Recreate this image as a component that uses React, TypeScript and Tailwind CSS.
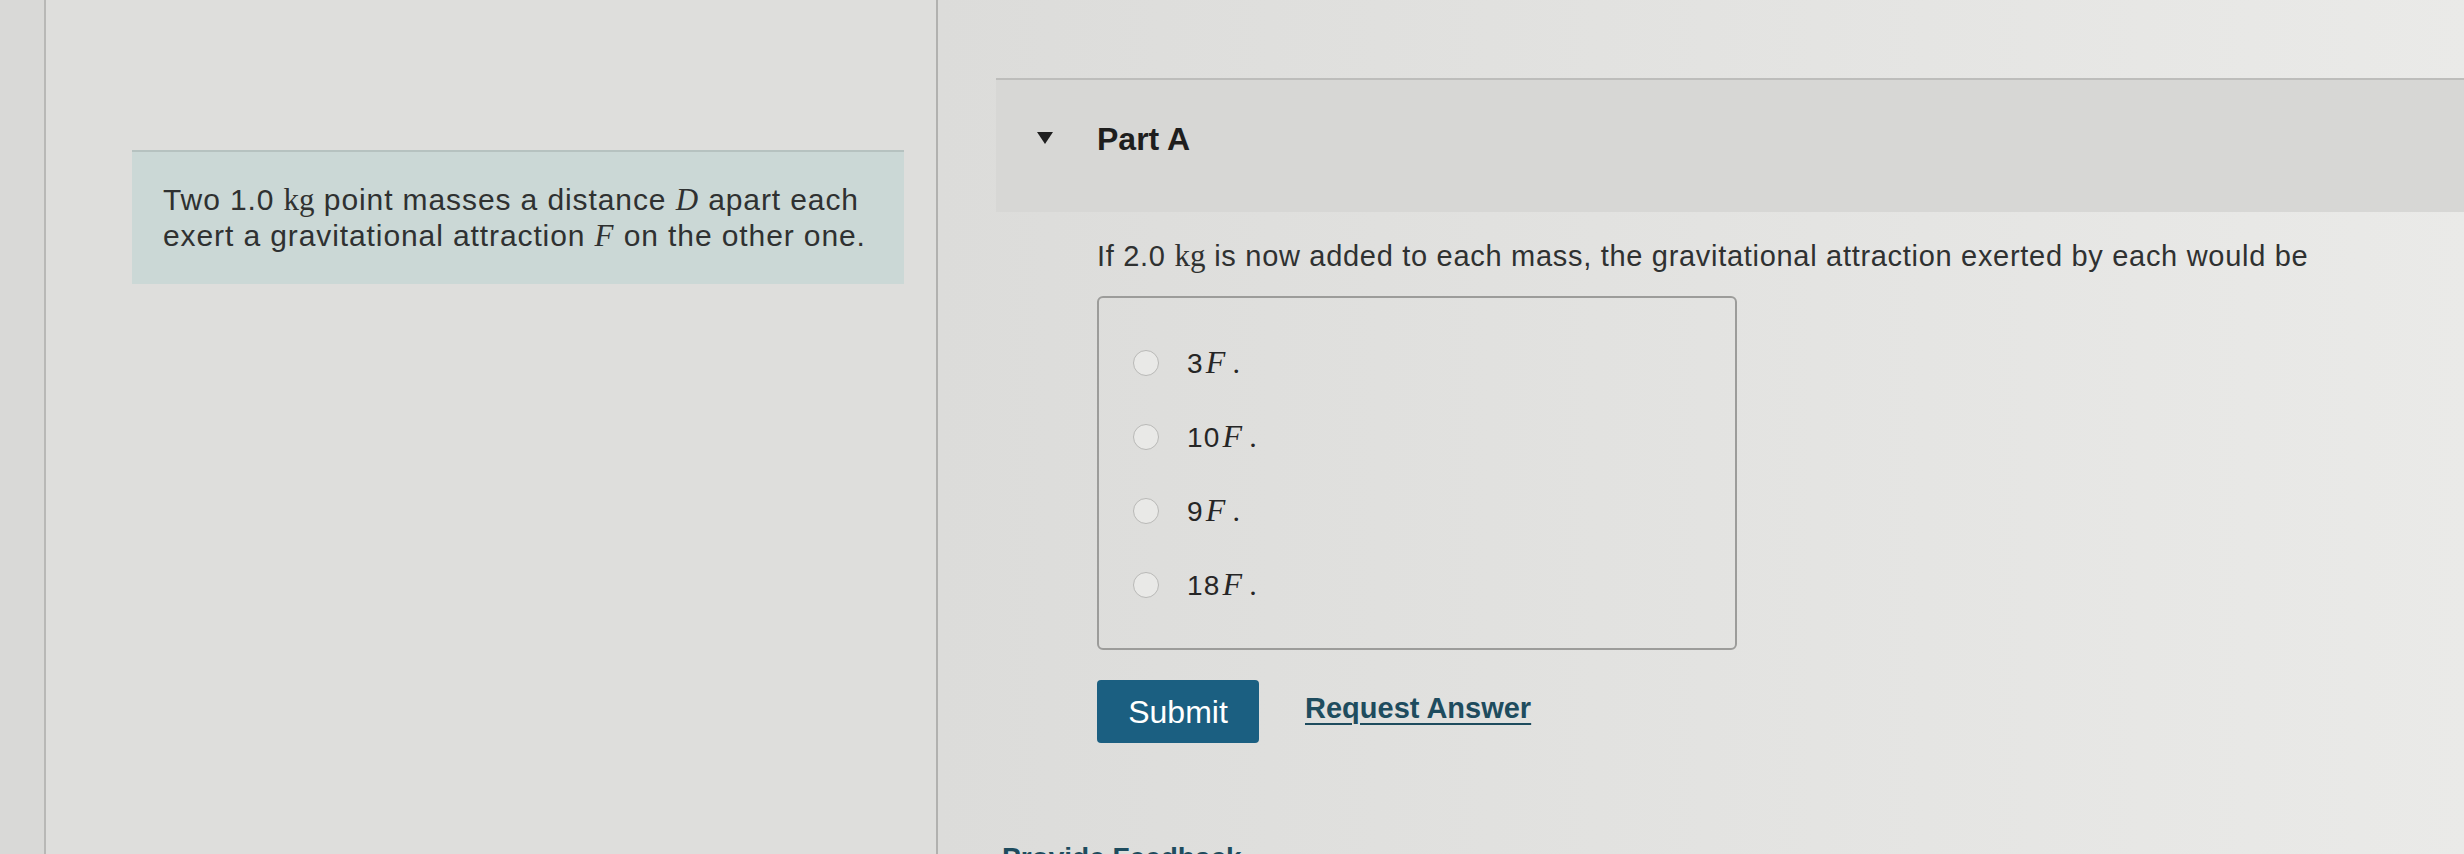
import React from 'react';

const sans = "font-['Liberation_Sans',Arial,sans-serif]";
const serif = "font-['Liberation_Serif','Times_New_Roman',serif]";

const OPTIONS = ['3', '10', '9', '18'];

function Radio() {
  return <span className="w-[26px] h-[26px] rounded-full border-[1.5px] border-[#b9b9b7] bg-[#e9e9e7] shrink-0" />;
}

export default function App() {
  return (
    <div className={`flex w-[2464px] h-[854px] overflow-hidden ${sans}`}>
      {/* left gutter */}
      <div className="w-[46px] bg-[#d9d9d7] border-r-2 border-[#b8b8b6]" />

      {/* intro column */}
      <div className="w-[892px] bg-[#dededc] border-r-2 border-[#b1b1af] pt-[150px] pl-[86px]">
        <div className="w-[772px] bg-[#cbd8d6] border-t-2 border-[#b6c2c0] px-[31px] pt-[30px] pb-[30px] text-[30px] leading-[36px] tracking-[0.9px] text-[#2f3131]">
          Two 1.0 <span className={`${serif} text-[31px] tracking-normal`}>kg</span> point masses a distance{' '}
          <span className={`${serif} italic text-[31px]`}>D</span> apart each exert a gravitational attraction{' '}
          <span className={`${serif} italic text-[31px]`}>F</span> on the other one.
        </div>
      </div>

      {/* part column */}
      <div className="flex-1 bg-linear-to-r from-[#dcdcda] to-[#eaeae8] pt-[78px] pl-[58px]">
        <div className="h-[134px] bg-[#d7d7d5] border-t-2 border-[#bdbdbb] flex items-start pt-[42px] pl-[41px]">
          <svg width="16" height="12" viewBox="0 0 16 12" className="mt-[10px]">
            <path d="M0 0 H16 L8 12 Z" fill="#1f1f1f" />
          </svg>
          <span className="ml-[44px] text-[32px] leading-[34px] font-bold text-[#1e1e1e]">Part A</span>
        </div>

        <div className="pl-[101px]">
          <p className="mt-[26px] text-[29px] leading-[36px] tracking-[0.7px] text-[#2f3131]">
            If 2.0 <span className={`${serif} text-[31px] tracking-normal`}>kg</span> is now added to each mass, the gravitational attraction exerted by each would be
          </p>

          <div className="mt-[22px] w-[640px] h-[354px] border-2 border-[#9c9c9a] rounded-[6px] pt-[51px] pl-[34px] flex flex-col gap-[46px]">
            {OPTIONS.map(n => (
              <label key={n} className="flex items-center h-[28px]">
                <Radio />
                <span className="ml-[28px] text-[28px] leading-[28px] text-[#262626] tracking-[1.2px]">
                  {n}
                  <span className={`${serif} italic text-[32px] ml-[2px]`}>F</span>
                  <span className={`${serif} text-[30px] ml-[6px]`}>.</span>
                </span>
              </label>
            ))}
          </div>

          <div className="mt-[30px] flex items-center">
            <button className="w-[162px] h-[63px] rounded-[4px] bg-[#1b5f81] text-white text-[32px] leading-none">
              Submit
            </button>
            <a className="ml-[46px] -mt-[6px] text-[29px] font-bold text-[#1e4c5e] underline underline-offset-[5px] decoration-2">
              Request Answer
            </a>
          </div>
        </div>

        <div className="mt-[97px] ml-[6px] text-[28px] leading-[36px] font-bold text-[#1e4c5e]">Provide Feedback</div>
      </div>
    </div>
  );
}
